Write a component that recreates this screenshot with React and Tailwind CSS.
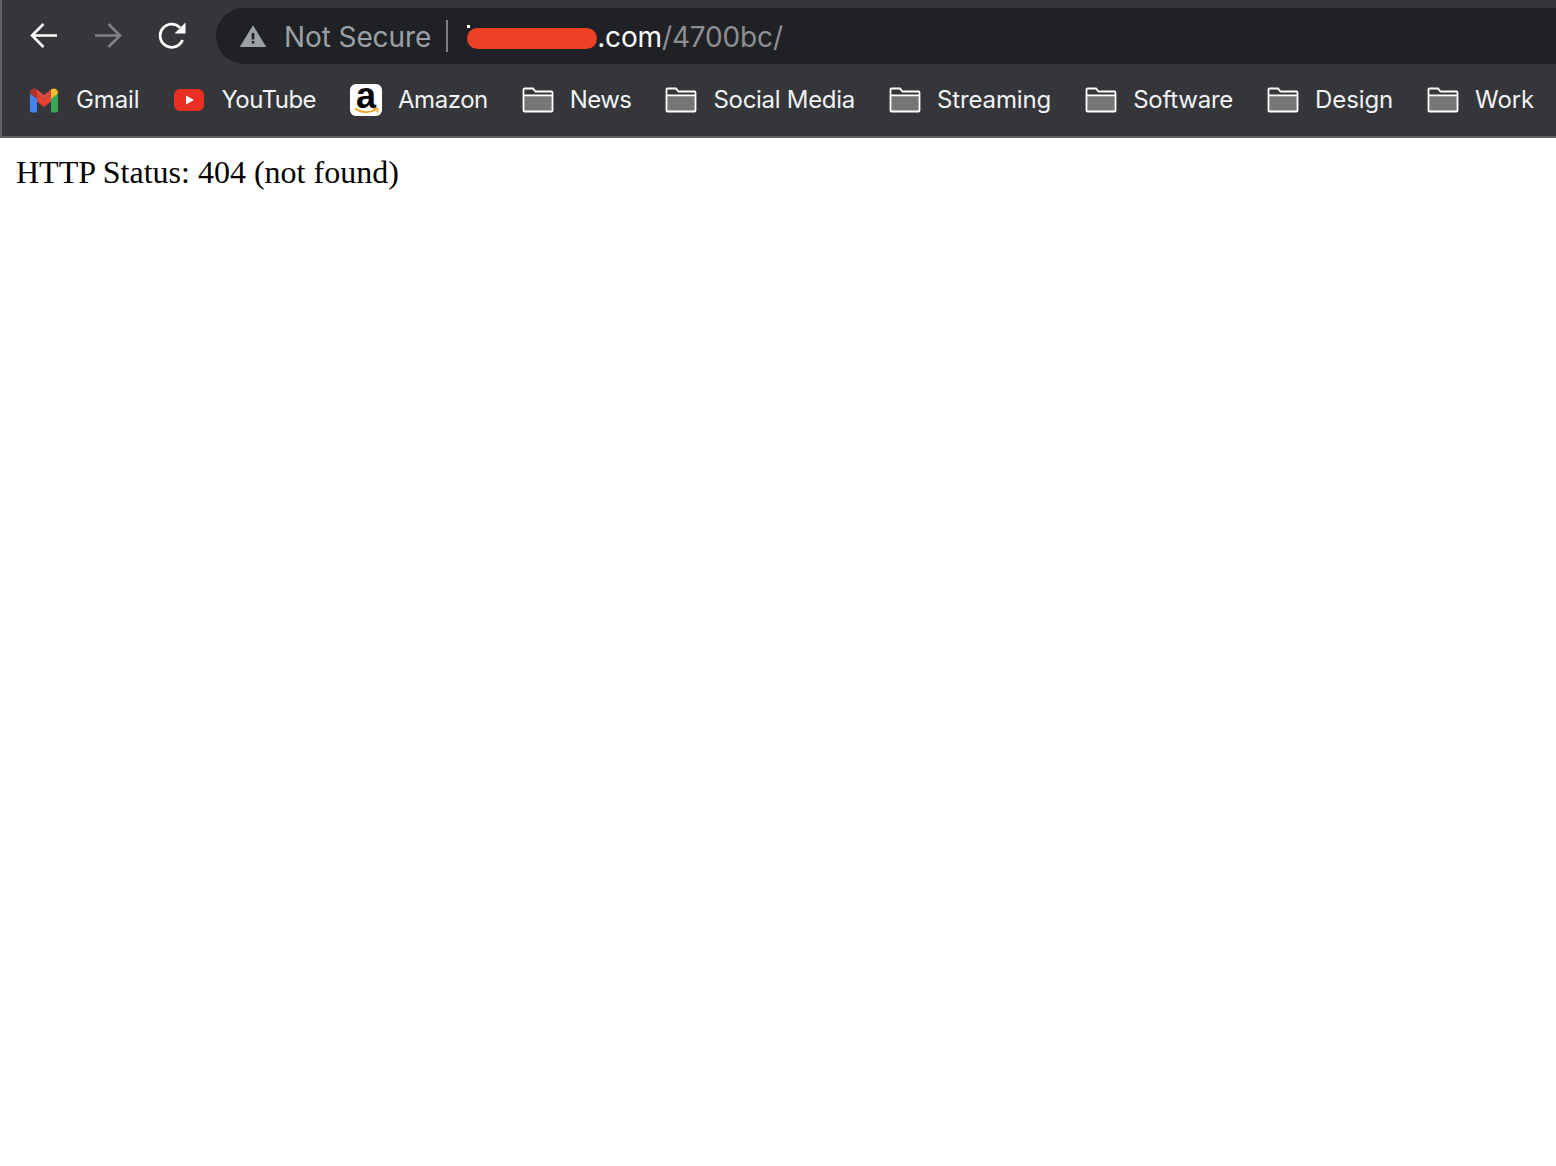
const folders = [
  { name: "News", tracking: "tracking-[-0.6px]" },
  { name: "Social Media", tracking: "tracking-[-0.29px]" },
  { name: "Streaming", tracking: "tracking-[-0.12px]" },
  { name: "Software", tracking: "tracking-[-0.24px]" },
  { name: "Design", tracking: "tracking-[-0.12px]" },
  { name: "Work", tracking: "tracking-[-0.12px]" },
];

const BackIcon = () => (
  <svg width="32" height="32" viewBox="0 0 32 32" fill="none" stroke="#ffffff" strokeWidth="2.6">
    <path d="M29 15.500H4M15.500 4 4 15.500 15.500 27" />
  </svg>
);

const ForwardIcon = () => (
  <svg width="32" height="32" viewBox="0 0 32 32" fill="none" stroke="#808184" strokeWidth="2.6">
    <path d="M3 15.500h25M16.500 4 28 15.500 16.500 27" />
  </svg>
);

const ReloadIcon = () => (
  <svg width="32" height="32" viewBox="0 0 32 32" fill="none">
    <path d="M26.500 20A11.600 11.600 0 1 1 24 7.500" stroke="#ffffff" strokeWidth="2.8" />
    <path d="M29.500 2.500V13.500H18.500z" fill="#ffffff" />
  </svg>
);

const WarningIcon = () => (
  <svg width="26" height="22" viewBox="0 0 26 22">
    <path d="M13 1 25.500 21.500H.5z" fill="#9aa0a6" stroke="#9aa0a6" strokeLinejoin="round" />
    <path d="M11.700 8h2.600v6.500h-2.600zM11.700 16h2.600v2.600h-2.600z" fill="#202124" />
  </svg>
);

const GmailIcon = () => (
  <svg width="32" height="32" viewBox="0 0 32 32">
    <path d="M2 9.500v17a2 2 0 0 0 2 2h5v-14z" fill="#4285f4" />
    <path d="M30 9.500v17a2 2 0 0 1-2 2h-5v-14z" fill="#34a853" />
    <path d="M9 10.500 16 16l7-5.500v7L16 23l-7-5.500z" fill="#ea4335" />
    <path d="M2 9c0-4 4-6 7-3.500v9.500L2 9.500z" fill="#b3322a" />
    <path d="M30 9c0-4-4-6-7-3.500v9.500l7-5.500z" fill="#f2bd2e" />
    <path d="M9 5.500 16 11l7-5.500v5L16 16l-7-5.500z" fill="#db4a3c" />
  </svg>
);

const YoutubeIcon = () => (
  <svg width="32" height="32" viewBox="0 0 32 32">
    <rect x="1" y="5" width="30" height="22" rx="6" fill="#ea2e23" />
    <path d="M13 11.500 21 16l-8 4.500z" fill="#ffffff" />
  </svg>
);

const AmazonIcon = () => (
  <div className="flex h-8 w-8 flex-col items-center rounded-md bg-white">
    <span className="h-[23px] font-['Liberation_Sans',sans-serif] text-[36px] font-bold leading-[24px] text-black">
      a
    </span>
    <svg width="28" height="8" viewBox="0 0 28 8" fill="none" stroke="#f2a22c" strokeWidth="1.700">
      <path d="M3 1.500C9 6 18 6.500 24 2.500M21 1.500h4.500V5.500" />
    </svg>
  </div>
);

const FolderIcon = () => (
  <svg width="32" height="32" viewBox="0 0 32 32" fill="none">
    <path d="M2 13h28v14H2z" fill="#757678" />
    <path
      d="M1.500 5.500a1 1 0 0 1 1-1h8.500l2.500 3h16a1 1 0 0 1 1 1v18a1 1 0 0 1-1 1h-27a1 1 0 0 1-1-1zM1.500 11.500h29"
      stroke="#ffffff"
      strokeWidth="1.800"
    />
  </svg>
);

const Bookmark = ({ icon, label, tracking = "tracking-[-0.12px]" }) => (
  <div className="flex shrink-0 items-center gap-4">
    {icon}
    <span className={`text-2xl leading-8 whitespace-nowrap text-[#f1f3f4] ${tracking}`}>{label}</span>
  </div>
);

export default function App() {
  return (
    <div className="min-h-screen bg-white font-['Inter',sans-serif]">
      <div className="h-[138px] overflow-hidden border-b-2 border-l-2 border-[#5f6064] bg-[#35363a]">
        <div className="flex h-[72px] items-start bg-[#35363a] pt-2">
          <div className="flex h-14 shrink-0 items-center gap-8 pl-[26px]">
            <BackIcon />
            <ForwardIcon />
            <ReloadIcon />
          </div>
          <div className="ml-[28px] flex h-14 flex-1 items-center rounded-l-[28px] bg-[#202124] pl-6">
            <WarningIcon />
            <span className="mt-px ml-[18px] text-[28px] leading-8 tracking-[-0.1px] text-[#9aa0a6]">Not Secure</span>
            <div className="ml-[15px] h-8 w-0.5 bg-[#7c7e81]"></div>
            <div className="relative mt-[5px] ml-[19px] h-[21px] w-[130px] rounded-full bg-[#ee4027]">
              <div className="absolute -top-[3px] left-0 h-[3px] w-[3px] bg-white"></div>
            </div>
            <span className="mt-px text-[28px] leading-8 tracking-[-0.15px] text-white">.com</span>
            <span className="mt-px text-[28px] leading-8 tracking-[-0.15px] text-[#8d8f92]">/4700bc/</span>
          </div>
        </div>
        <div className="flex h-14 items-center gap-[34px] pl-[26px]">
          <Bookmark icon={<GmailIcon />} label="Gmail" />
          <Bookmark icon={<YoutubeIcon />} label="YouTube" tracking="tracking-[-0.55px]" />
          <Bookmark icon={<AmazonIcon />} label="Amazon" tracking="tracking-[-0.45px]" />
          {folders.map((f) => (
            <Bookmark key={f.name} icon={<FolderIcon />} label={f.name} tracking={f.tracking} />
          ))}
        </div>
      </div>
      <p className="px-4 pt-4 font-['Liberation_Serif',serif] text-[32px] leading-9 text-black">
        HTTP Status: 404 (not found)
      </p>
    </div>
  );
}
